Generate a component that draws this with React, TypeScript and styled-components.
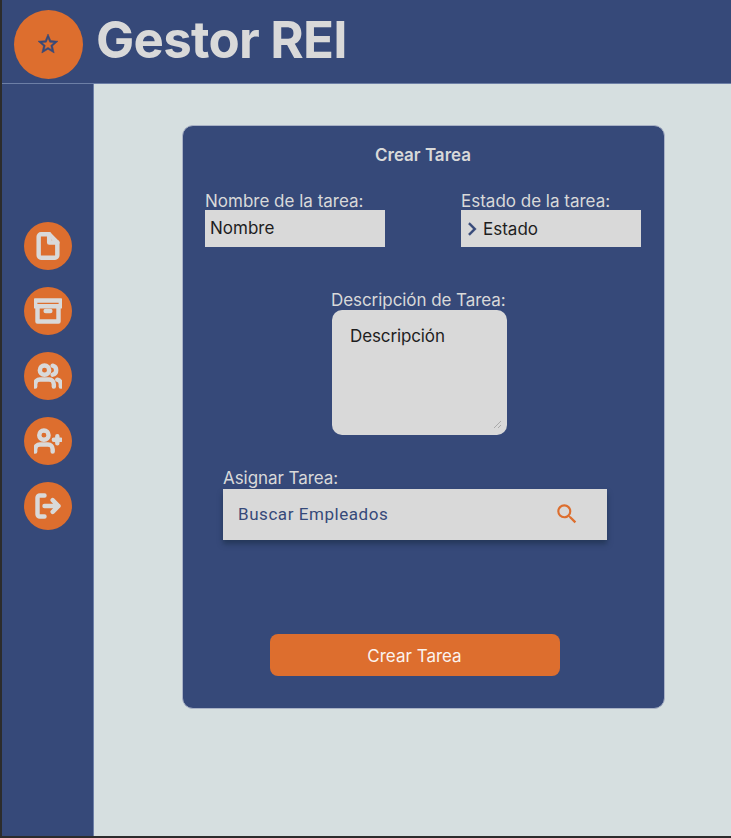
import React from "react";
import styled, { createGlobalStyle } from "styled-components";

const colors = {
  blue: "#364979",
  orange: "#dd6e2e",
  light: "#d9d9d9",
  page: "#d6dfe0",
  edge: "#2c2c2c",
  line: "#6d7fa6",
};

const GlobalStyle = createGlobalStyle`
  * { box-sizing: border-box; }
  body { margin: 0; background: ${colors.edge}; font-family: Inter, sans-serif; }
  button, input, textarea { font: inherit; border: 0; outline: 0; border-radius: 0; }
`;

const Shell = styled.div`
  height: 838px;
  padding: 0 0 2px 2px;
  display: flex;
  flex-direction: column;
  overflow: hidden;
`;

const Header = styled.header`
  height: 84px;
  flex: none;
  display: flex;
  align-items: flex-start;
  padding: 10px 0 0 12px;
  background: ${colors.blue};
  border-bottom: 1px solid ${colors.line};
`;

const Logo = styled.div`
  width: 69px;
  height: 69px;
  padding: 0 0.5px 0.5px 0;
  border-radius: 50%;
  background: ${colors.orange};
  color: ${colors.blue};
  display: flex;
  align-items: center;
  justify-content: center;
`;

const Title = styled.h1`
  margin: -1px 0 0 13px;
  font-size: 51px;
  line-height: 62px;
  font-weight: 700;
  letter-spacing: -0.75px;
  color: ${colors.light};
`;

const Body = styled.div`
  flex: 1;
  display: flex;
  min-height: 0;
`;

const Sidebar = styled.nav`
  width: 92px;
  flex: none;
  padding: 137.6px 0 0 22.4px;
  display: flex;
  flex-direction: column;
  gap: 17.1px;
  background: ${colors.blue};
  border-right: 1px solid ${colors.line};
`;

const NavButton = styled.button`
  width: 48px;
  height: 48px;
  padding: 0;
  border-radius: 50%;
  background: ${colors.orange};
  color: ${colors.light};
  display: flex;
  align-items: center;
  justify-content: center;
`;

const StrokeIcon = styled.svg`
  width: 28px;
  height: 28px;
  fill: none;
  stroke: currentColor;
  stroke-width: 3.8;
  stroke-linecap: round;
  stroke-linejoin: round;
`;

const SolidIcon = styled.svg<{ $size: number; $weight?: number }>`
  width: ${(p) => p.$size}px;
  height: ${(p) => p.$size}px;
  flex: none;
  fill: currentColor;
  stroke: currentColor;
  stroke-width: ${(p) => p.$weight ?? 0};
`;

const Main = styled.main`
  flex: 1;
  padding: 41px 0 0 88px;
  background: ${colors.page};
`;

const Card = styled.form`
  width: 483px;
  height: 584px;
  padding: 18px 23px 0 22px;
  display: flex;
  flex-direction: column;
  background: ${colors.blue};
  border: 1px solid #a9b2c6;
  border-radius: 11px;
`;

const CardTitle = styled.h2`
  margin: 0;
  font-size: 17px;
  line-height: 22px;
  font-weight: 600;
  text-align: center;
  color: ${colors.light};
`;

const FieldRow = styled.div`
  display: flex;
  justify-content: space-between;
  margin-top: 26px;
`;

const Field = styled.div<{ $width: number }>`
  width: ${(p) => p.$width}px;
  display: flex;
  flex-direction: column;
`;

const Label = styled.label<{ $line?: number; $tracking?: number }>`
  font-size: 17px;
  line-height: ${(p) => p.$line ?? 20}px;
  letter-spacing: ${(p) => p.$tracking ?? 0}px;
  white-space: nowrap;
  color: ${colors.light};
`;

const TextInput = styled.input`
  width: 100%;
  height: 37px;
  padding: 0 5px 1px;
  font-size: 17px;
  background: ${colors.light};
  color: #1e1e1e;
  &::placeholder { color: inherit; opacity: 1; }
`;

const SelectBox = styled.div`
  height: 37px;
  display: flex;
  align-items: center;
  padding: 1px 0 0;
  font-size: 17px;
  background: ${colors.light};
  color: #1e1e1e;
`;

const Chevron = styled(SolidIcon)`
  margin: -1px -2px 0 -2px;
  color: ${colors.blue};
`;

const DescriptionField = styled(Field)`
  margin: 43px 0 0 126px;
`;

const AreaFrame = styled.div`
  width: 175px;
  height: 125px;
  margin-left: 1px;
  padding: 15px 5px 6px 18px;
  display: flex;
  flex-direction: column;
  justify-content: space-between;
  border-radius: 10px;
  background: ${colors.light};
`;

const AreaInput = styled.textarea`
  width: 100%;
  height: 50px;
  padding: 0;
  resize: none;
  overflow: hidden;
  font-size: 17px;
  line-height: 22px;
  letter-spacing: -0.12px;
  background: transparent;
  color: #1e1e1e;
  &::placeholder { color: inherit; opacity: 1; }
`;

const ResizeGrip = styled.svg`
  width: 9px;
  height: 9px;
  align-self: flex-end;
  stroke: #aaa;
  stroke-width: 1;
  fill: none;
`;

const AssignField = styled(Field)`
  margin: 33px 0 0 18px;
`;

const SearchBar = styled.div`
  height: 51px;
  display: flex;
  align-items: center;
  justify-content: space-between;
  padding: 0 27.5px 1px 15px;
  background: ${colors.light};
  color: ${colors.orange};
  box-shadow: 0 4px 5px rgba(20, 40, 60, 0.5);
`;

const SearchInput = styled.input`
  width: 220px;
  padding: 0 0 1px;
  font-family: Roboto, sans-serif;
  font-size: 17px;
  letter-spacing: 0.55px;
  background: transparent;
  color: ${colors.blue};
  &::placeholder { color: inherit; opacity: 1; }
`;

const SubmitButton = styled.button`
  width: 290px;
  height: 42px;
  margin: 94px 0 0 65px;
  padding: 2px 1px 0 0;
  border-radius: 8px;
  font-size: 17px;
  background: ${colors.orange};
  color: #fbf3ee;
`;

const navItems: { label: string; icon: React.ReactNode }[] = [
  {
    label: "Documentos",
    icon: (
      <>
        <path d="M13 2H6a2 2 0 0 0-2 2v16a2 2 0 0 0 2 2h12a2 2 0 0 0 2-2V9z" />
        <path d="M13 2v7h7" />
      </>
    ),
  },
  {
    label: "Archivo",
    icon: (
      <>
        <path d="M21 8v13H3V8" />
        <rect x="1" y="3" width="22" height="5" />
        <path d="M10 12h4" />
      </>
    ),
  },
  {
    label: "Empleados",
    icon: (
      <>
        <path d="M17 21v-2a4 4 0 0 0-4-4H5a4 4 0 0 0-4 4v2" />
        <circle cx="9" cy="7" r="4" />
        <path d="M23 21v-2a4 4 0 0 0-3-3.87M16 3.13a4 4 0 0 1 0 7.75" />
      </>
    ),
  },
  {
    label: "Agregar empleado",
    icon: (
      <>
        <path d="M16 21v-2a4 4 0 0 0-4-4H5a4 4 0 0 0-4 4v2" />
        <circle cx="8.5" cy="7" r="4" />
        <path d="M20 8v6M23 11h-6" />
      </>
    ),
  },
  {
    label: "Salir",
    icon: <path d="M9 21H5a2 2 0 0 1-2-2V5a2 2 0 0 1 2-2h4M16 17l5-5-5-5M21 12H9" />,
  },
];

export default function App() {
  return (
    <>
      <GlobalStyle />
      <Shell>
        <Header>
          <Logo>
            <SolidIcon $size={24} $weight={0.5} viewBox="0 0 24 24">
              <path d="M22 9.24l-7.19-.62L12 2 9.19 8.63 2 9.24l5.46 4.73L5.82 21 12 17.27 18.18 21l-1.63-7.03L22 9.24zM12 15.4l-3.76 2.27 1-4.28-3.32-2.88 4.38-.38L12 6.1l1.71 4.04 4.38.38-3.32 2.88 1 4.28L12 15.4z" />
            </SolidIcon>
          </Logo>
          <Title>Gestor REI</Title>
        </Header>
        <Body>
          <Sidebar>
            {navItems.map((item) => (
              <NavButton key={item.label} aria-label={item.label}>
                <StrokeIcon viewBox="0 0 24 24">{item.icon}</StrokeIcon>
              </NavButton>
            ))}
          </Sidebar>
          <Main>
            <Card>
              <CardTitle>Crear Tarea</CardTitle>
              <FieldRow>
                <Field $width={180}>
                  <Label $line={18} htmlFor="name">Nombre de la tarea:</Label>
                  <TextInput id="name" placeholder="Nombre" />
                </Field>
                <Field $width={180}>
                  <Label $line={18}>Estado de la tarea:</Label>
                  <SelectBox>
                    <Chevron $size={26} $weight={0.3} viewBox="0 0 24 24">
                      <path d="M10 6L8.59 7.41 13.17 12l-4.58 4.59L10 18l6-6z" />
                    </Chevron>
                    Estado
                  </SelectBox>
                </Field>
              </FieldRow>
              <DescriptionField $width={176}>
                <Label $tracking={-0.06} htmlFor="description">Descripción de Tarea:</Label>
                <AreaFrame>
                  <AreaInput id="description" placeholder="Descripción" />
                  <ResizeGrip viewBox="0 0 9 9">
                    <path d="M1 8L8 1M5 8L8 5" />
                  </ResizeGrip>
                </AreaFrame>
              </DescriptionField>
              <AssignField $width={384}>
                <Label $line={21} $tracking={-0.06} htmlFor="assign">Asignar Tarea:</Label>
                <SearchBar>
                  <SearchInput id="assign" placeholder="Buscar Empleados" />
                  <SolidIcon $size={26} viewBox="0 0 24 24">
                    <path d="M15.5 14h-.79l-.28-.27A6.471 6.471 0 0 0 16 9.5 6.5 6.5 0 1 0 9.5 16c1.61 0 3.09-.59 4.23-1.57l.27.28v.79l5 4.99L20.49 19l-4.99-5zm-6 0C7.01 14 5 11.99 5 9.5S7.01 5 9.5 5 14 7.01 14 9.5 11.99 14 9.5 14z" />
                  </SolidIcon>
                </SearchBar>
              </AssignField>
              <SubmitButton type="button">Crear Tarea</SubmitButton>
            </Card>
          </Main>
        </Body>
      </Shell>
    </>
  );
}
